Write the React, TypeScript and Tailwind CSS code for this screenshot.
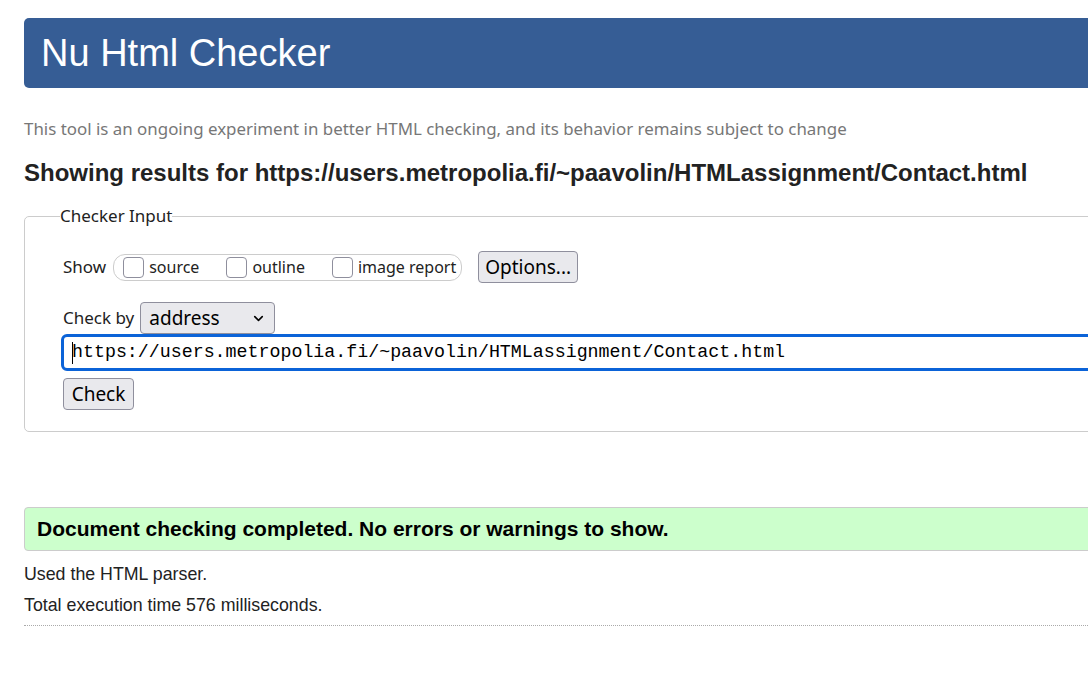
import { ChevronDown } from 'lucide-react';

const sans = 'font-["Liberation_Sans",Arial,sans-serif]';
const ui = 'font-["Noto_Sans","Open_Sans",sans-serif]';

function Box({ label }: { label: string }) {
  return (
    <label className="flex items-center gap-[5px]">
      <span className="w-[21px] h-[21px] rounded-[4px] border border-[#8f8f9d] bg-white" />
      <span className="text-[16px] text-[#222]">{label}</span>
    </label>
  );
}

export default function App() {
  return (
    <div className="w-[1088px] h-[678px] overflow-hidden bg-white">
      <div className="w-[1200px] pl-6 pt-[18px]">
        <header className="h-[70px] bg-[#365d95] rounded-[5px] flex items-center pl-[17px]">
          <h1 className={`${sans} text-white text-[38px] leading-none`}>Nu Html Checker</h1>
        </header>

        <p className={`${ui} text-[#777] text-[16.9px] mt-[29px] leading-[24px]`}>
          This tool is an ongoing experiment in better HTML checking, and its behavior remains subject to change
        </p>

        <h2 className={`${sans} font-bold text-[#222] text-[24px] mt-[18px] leading-[28px]`}>
          Showing results for https://users.metropolia.fi/~paavolin/HTMLassignment/Contact.html
        </h2>

        <fieldset className={`${ui} mt-[17px] border border-[#ccc] rounded-[5px] pl-[36px] pr-4 pb-[21px] pt-[23px]`}>
          <legend className="-ml-px px-0 text-[17px] text-[#222] leading-[24px]">Checker Input</legend>

          <div className="flex items-center">
            <span className="text-[17px] text-[#222] ml-[2px] mr-[7px]">Show</span>
            <div className="h-[27px] w-[349px] rounded-[12px] border border-[#ccc] flex items-center pl-[9px] gap-[27px]">
              <Box label="source" />
              <Box label="outline" />
              <Box label="image report" />
            </div>
            <button className="ml-[16px] h-[32px] w-[100px] rounded-[4px] border border-[#8f8f9d] bg-[#e9e9ed] text-[19px] text-black leading-none">
              Options...
            </button>
          </div>

          <div className="flex items-center mt-[19px]">
            <span className="text-[17px] text-[#222] ml-[2px] mr-[6px]">Check by</span>
            <div className="w-[135px] h-[32px] rounded-[4px] border border-[#8f8f9d] bg-[#e9e9ed] flex items-center justify-between pl-[8px] pr-[8px]">
              <span className="text-[19px] text-black leading-none">address</span>
              <ChevronDown className="w-[15px] h-[15px] text-black" strokeWidth={2.5} />
            </div>
          </div>

          <div className="mt-0 h-[37px] border-[3px] border-[#0b63d8] rounded-[6px] flex items-center pl-[8px]">
            <span className="w-[1px] h-[22px] bg-black -mr-[1px]" />
            <span className={`font-["Liberation_Mono","DejaVu_Sans_Mono",monospace] text-[18.3px] text-black leading-none`}>
              https://users.metropolia.fi/~paavolin/HTMLassignment/Contact.html
            </span>
          </div>

          <button className="mt-[7px] ml-[2px] h-[32px] w-[71px] rounded-[4px] border border-[#8f8f9d] bg-[#e9e9ed] text-[19px] text-black leading-none">
            Check
          </button>
        </fieldset>

        <div className={`${sans} mt-[75px] h-[44px] bg-[#ccffcc] border border-[#ccc] rounded-[4px] flex items-center pl-[12px]`}>
          <span className="font-bold text-[21px] text-black">Document checking completed. No errors or warnings to show.</span>
        </div>

        <p className={`${sans} text-[17.8px] text-[#222] mt-[12px] leading-[22px]`}>Used the HTML parser.</p>
        <p className={`${sans} text-[17.8px] text-[#222] mt-[9px] leading-[22px]`}>Total execution time 576 milliseconds.</p>
        <div className="mt-[9px] border-t border-dotted border-[#aaa]" />
      </div>
    </div>
  );
}
